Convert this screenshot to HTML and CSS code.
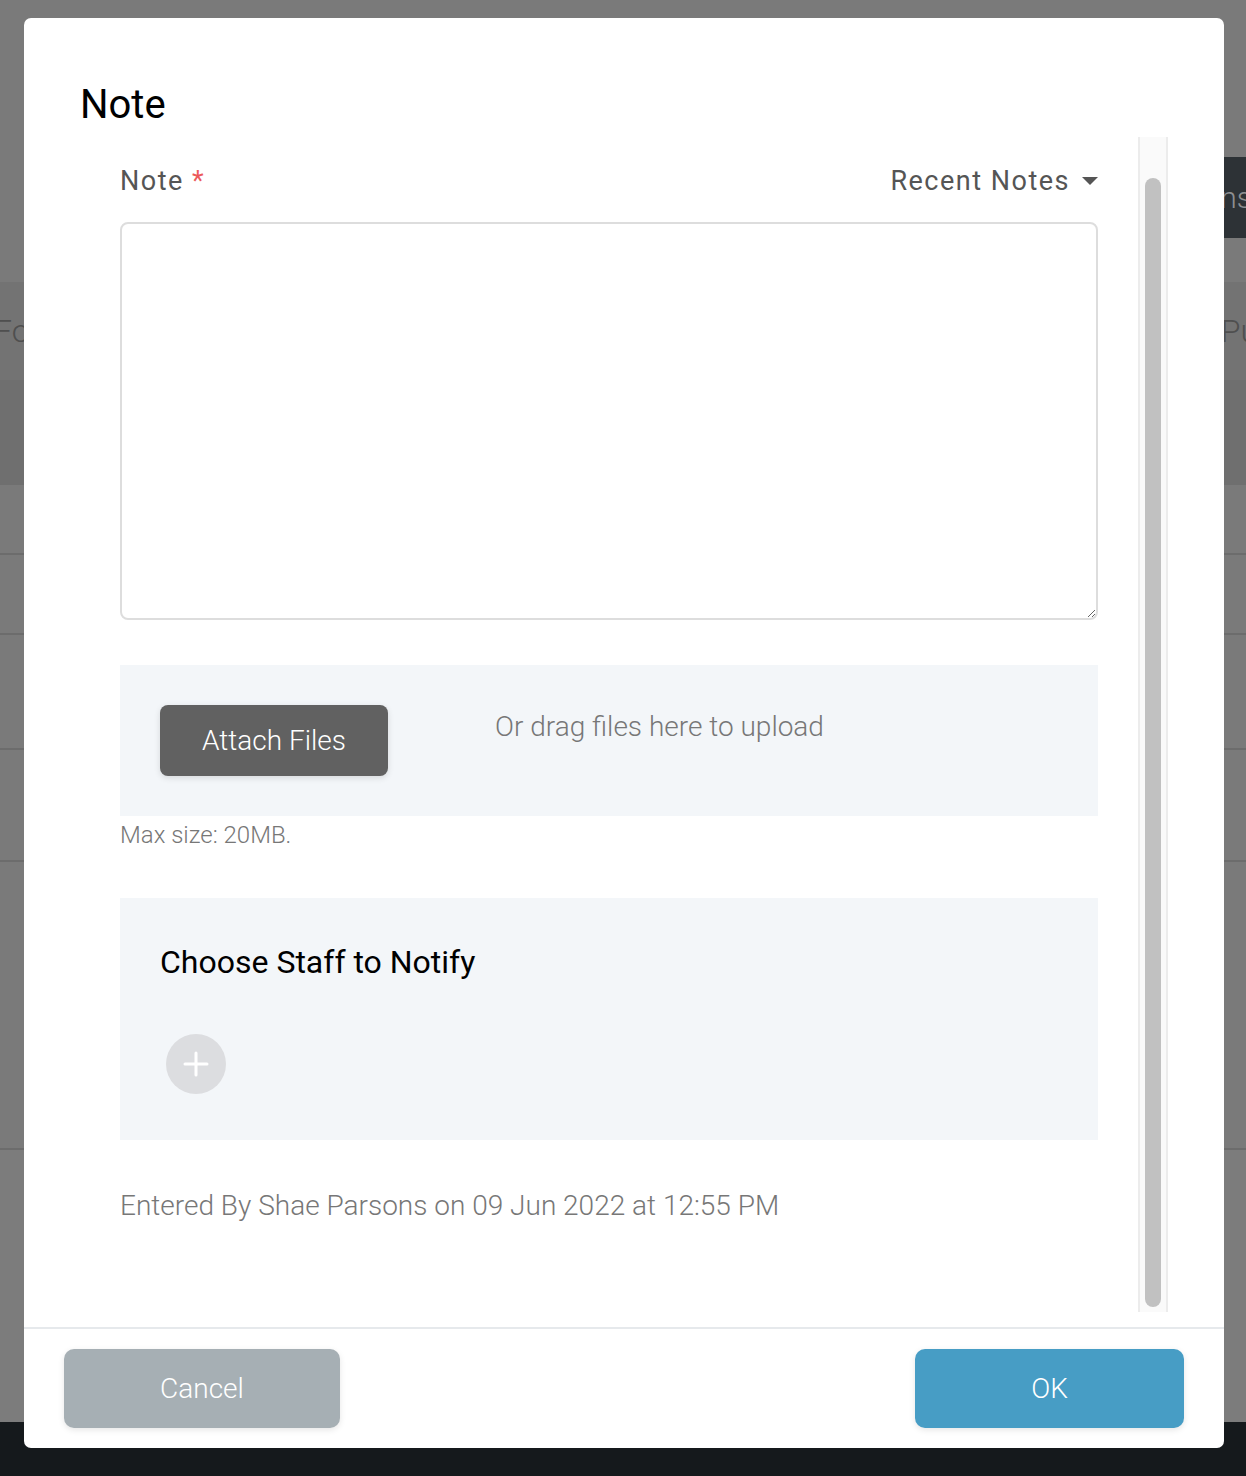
FILE: index.html
```html
<!DOCTYPE html>
<html lang="en">
<head>
    <meta charset="UTF-8">
    <meta name="viewport" content="width=device-width, initial-scale=1.0">
    <title>Note</title>
    <link rel="stylesheet" href="styles.css">
</head>
<body>
    <div class="page">
        <div class="bg-row bg-top"></div>
        <div class="bg-row bg-bar"><span class="bar-btn">Actions</span></div>
        <div class="bg-row bg-gap"></div>
        <div class="bg-row bg-head"><span class="head-left">Fo</span><span class="head-right">Pu</span></div>
        <div class="bg-row bg-sub"></div>
        <div class="bg-row bg-line h70"></div>
        <div class="bg-row bg-line h80"></div>
        <div class="bg-row bg-line h115"></div>
        <div class="bg-row bg-line h112"></div>
        <div class="bg-row bg-line h288"></div>
        <div class="bg-row bg-rest"></div>
        <div class="bg-row bg-footer"></div>
    </div>

    <div class="modal">
        <div class="modal-header">
            <h1 class="modal-title">Note</h1>
        </div>
        <div class="modal-body">
            <div class="content">
                <div class="label-row">
                    <label class="label">Note <span class="required">*</span></label>
                    <span class="recent">Recent Notes <span class="caret"></span></span>
                </div>
                <textarea class="note-input"></textarea>

                <div class="upload">
                    <button class="attach">Attach Files</button>
                    <span class="drag-hint">Or drag files here to upload</span>
                </div>
                <div class="max-size">Max size: 20MB.</div>

                <div class="staff">
                    <h2 class="staff-title">Choose Staff to Notify</h2>
                    <button class="add-staff">
                        <svg width="28" height="28" viewBox="0 0 28 28">
                            <path d="M14 3v22M3 14h22" stroke="#fff" stroke-width="3" stroke-linecap="round"/>
                        </svg>
                    </button>
                </div>

                <div class="entered">Entered By Shae Parsons on 09 Jun 2022 at 12:55 PM</div>
            </div>
            <div class="scroll-track">
                <div class="scroll-thumb"></div>
            </div>
        </div>
        <div class="modal-footer">
            <button class="btn btn-cancel">Cancel</button>
            <button class="btn btn-ok">OK</button>
        </div>
    </div>
</body>
</html>
```

FILE: styles.css
```css
html, body {
    margin: 0;
    padding: 0;
}
body {
    font-family: Roboto, "Liberation Sans", sans-serif;
    background-color: #7a7a7a;
    width: 1246px;
    height: 1476px;
    overflow: hidden;
    position: relative;
}

/* page behind the overlay */
.page {
    display: flex;
    flex-direction: column;
}
.bg-row {
    display: flex;
    align-items: center;
    justify-content: space-between;
    overflow: hidden;
}
.bg-top { height: 157px; }
.bg-bar {
    height: 81px;
    justify-content: flex-end;
}
.bar-btn {
    height: 81px;
    width: 300px;
    background-color: #2d3236;
    color: #8d8f91;
    font-size: 30px;
    font-weight: 300;
    line-height: 81px;
    text-align: right;
    margin-right: -6px;
}
.bg-gap { height: 44px; }
.bg-head {
    height: 98px;
    background-color: #737373;
    color: #4f4f4f;
    font-size: 32px;
    font-weight: 300;
}
.head-left { margin-left: -6px; }
.head-right { margin-right: -12px; }
.bg-sub {
    height: 105px;
    background-color: #6f6f6f;
}
.bg-line {
    border-bottom: 2px solid #6c6c6c;
    box-sizing: border-box;
}
.h70 { height: 70px; }
.h80 { height: 80px; }
.h115 { height: 115px; }
.h112 { height: 112px; }
.h288 { height: 288px; }
.bg-rest {
    height: 272px;
    background-color: #7c7c7c;
}
.bg-footer {
    height: 54px;
    background-color: #15191c;
}

/* modal */
.modal {
    position: absolute;
    top: 18px;
    left: 24px;
    width: 1200px;
    height: 1430px;
    background-color: #fff;
    border-radius: 7px;
    display: flex;
    flex-direction: column;
    box-sizing: border-box;
}
.modal-header {
    padding: 63px 56px 8px;
}
.modal-title {
    margin: 0;
    font-size: 40px;
    font-weight: 400;
    line-height: 48px;
    color: #000;
}
.modal-body {
    display: flex;
    height: 1175px;
}
.content {
    flex: 1;
    padding: 28px 40px 0 96px;
    display: flex;
    flex-direction: column;
}
.label-row {
    display: flex;
    justify-content: space-between;
    align-items: center;
    height: 32px;
    font-size: 27px;
    color: #555;
    letter-spacing: 1.5px;
}
.required {
    color: #ec5a5a;
}
.recent {
    display: flex;
    align-items: center;
}
.caret {
    width: 0;
    height: 0;
    margin-left: 12px;
    border-left: 8px solid transparent;
    border-right: 8px solid transparent;
    border-top: 8px solid #555;
}
.note-input {
    margin-top: 25px;
    height: 398px;
    border: 2px solid #dddddd;
    border-radius: 8px;
    box-sizing: border-box;
    resize: vertical;
    font-family: inherit;
    font-size: 26px;
    outline: none;
}
.upload {
    margin-top: 45px;
    background-color: #f3f6f9;
    padding: 40px;
    display: flex;
    align-items: flex-start;
}
.attach {
    width: 228px;
    height: 71px;
    border: none;
    border-radius: 8px;
    background-color: #616161;
    color: #fff;
    font-family: inherit;
    font-size: 28px;
    font-weight: 300;
    box-shadow: 0 2px 6px rgba(0,0,0,0.12);
    padding: 0;
}
.drag-hint {
    margin-left: 107px;
    margin-top: 4px;
    font-size: 28px;
    font-weight: 300;
    color: #777;
    line-height: 36px;
}
.max-size {
    margin-top: 6px;
    font-size: 24px;
    font-weight: 300;
    color: #777;
    line-height: 26px;
}
.staff {
    margin-top: 50px;
    background-color: #f3f6f9;
    padding: 45px 40px 46px;
    display: flex;
    flex-direction: column;
    align-items: flex-start;
}
.staff-title {
    margin: 0;
    font-size: 32px;
    font-weight: 400;
    line-height: 38px;
    color: #000;
}
.add-staff {
    margin-top: 53px;
    margin-left: 6px;
    width: 60px;
    height: 60px;
    border-radius: 50%;
    border: none;
    background-color: #dcdde0;
    display: flex;
    align-items: center;
    justify-content: center;
    padding: 0;
}
.entered {
    margin-top: 50px;
    font-size: 28px;
    font-weight: 300;
    color: #777;
    line-height: 32px;
}
.scroll-track {
    width: 26px;
    border-left: 2px solid #ececec;
    border-right: 2px solid #ececec;
    background-color: #fafafa;
    margin-right: 56px;
    padding: 41px 0 5px;
    display: flex;
    justify-content: center;
}
.scroll-thumb {
    width: 16px;
    background-color: #c1c1c1;
    border-radius: 8px;
}
.modal-footer {
    margin-top: 15px;
    border-top: 2px solid #e6e9ec;
    padding: 20px 40px;
    display: flex;
    justify-content: space-between;
}
.btn {
    height: 79px;
    border: none;
    border-radius: 10px;
    color: #fff;
    font-family: inherit;
    font-size: 28px;
    font-weight: 300;
    box-shadow: 0 2px 6px rgba(0,0,0,0.1);
}
.btn-cancel {
    width: 276px;
    background-color: #a6afb4;
}
.btn-ok {
    width: 269px;
    background-color: #479dc5;
}
```
